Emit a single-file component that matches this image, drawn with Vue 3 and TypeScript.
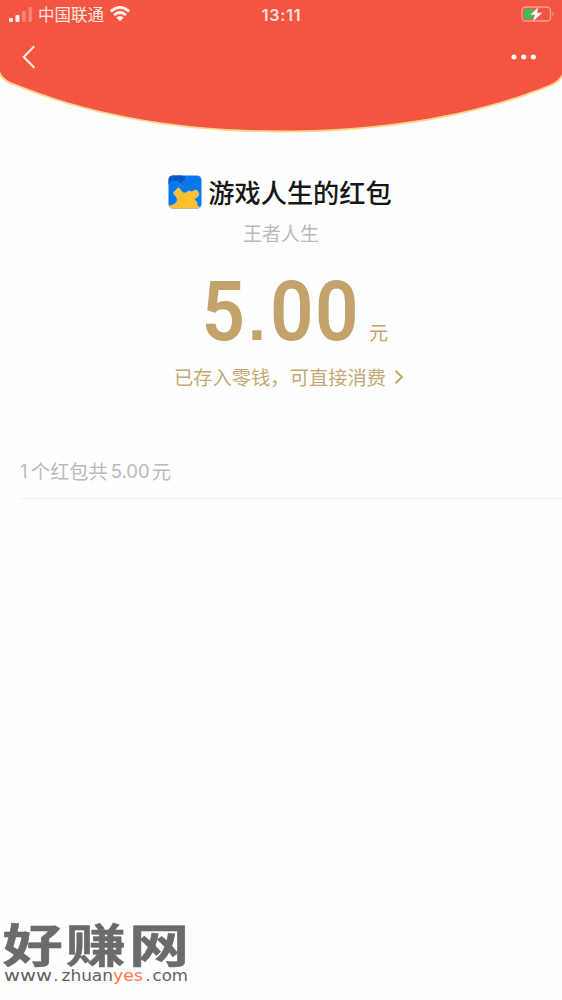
<script setup lang="ts">
const carrier = '中国联通'
const time = '13:11'
const sender = '游戏人生的红包'
const greeting = '王者人生'
</script>

<template>
  <main class="page">
    <header class="hero">
      <svg class="curve" width="562" height="136" viewBox="0 0 562 136" aria-hidden="true">
        <path class="glow" d="M0 0H562V74Q559 81 549 85C475 115 382 130.5 281 130.5S91 115 13 83Q4 80 0 72Z" />
        <path class="red" d="M0 0H562V74Q559 81 549 85C475 115 382 130.5 281 130.5S91 115 13 83Q4 80 0 72Z" />
      </svg>
      <div class="status">
        <div class="network">
          <svg class="signal" width="24" height="16" viewBox="0 0 24 16">
            <rect x="0" y="12" width="4" height="4" rx="1" />
            <rect x="6.5" y="9" width="4" height="7" rx="1" />
            <rect class="dim" x="13" y="5" width="4" height="11" rx="1" />
            <rect class="dim" x="19.5" y="1" width="3.5" height="15" rx="1" />
          </svg>
          <span class="carrier">{{ carrier }}</span>
          <svg class="wifi" width="22" height="16" viewBox="0 0 22 16">
            <path d="M1.8 5.4Q11-2.6 20.2 5.4M5 9Q11 4 17 9" />
            <path class="dot" d="M7.3 11.4Q11 8.4 14.7 11.4L11 15.2Z" />
          </svg>
        </div>
        <span class="time">{{ time }}</span>
        <svg class="battery" width="34" height="17" viewBox="0 0 34 17">
          <rect class="case" x="1" y="1" width="28.5" height="14" rx="3.5" />
          <rect class="charge" x="3" y="3" width="10" height="10" rx="1.5" />
          <path class="tip" d="M31.5 5.5Q33.5 8 31.5 10.5Z" />
          <path class="bolt" d="M17.5 .8L9 9H13.6L11.5 16L21.5 6.8H16.3Z" />
        </svg>
      </div>
      <nav class="nav">
        <svg width="14" height="24" viewBox="0 0 14 24"><path class="back" d="M12.3 1.2L1.7 12L12.3 22.8" /></svg>
        <svg width="26" height="6" viewBox="0 0 26 6"><g class="more"><circle cx="3" cy="3" r="2.5" /><circle cx="12.7" cy="3" r="2.5" /><circle cx="22.3" cy="3" r="2.5" /></g></svg>
      </nav>
    </header>

    <section class="summary">
      <div class="sender">
        <svg class="avatar" width="34" height="34" viewBox="0 0 34 34">
          <defs><clipPath id="tile"><rect x=".5" y=".5" width="33" height="33" rx="4.5" /></clipPath></defs>
          <g clip-path="url(#tile)">
            <rect width="34" height="34" fill="#0878ed" />
            <path d="M0 0H14L19 4L13 10L9 6L5 6L0 10Z" fill="#0759c9" />
            <path d="M20 2L10 12M9 6L16 13M5 6L1 10" fill="none" stroke="#2e8df2" stroke-width=".8" />
            <path d="M0 34V31Q5 31 8 28Q10.5 25 8.5 22Q5.5 19 5.5 17.5L10.5 12.5Q12.5 14 14 17Q16 19 18.5 17.5Q20.5 15.5 22 16.2Q24 17.5 25.5 16Q28 14 30 16.5Q32 19.5 29.5 22Q27 23 26.5 24.5L29 27.5Q28 30 31 32L34 33V34Z" fill="#ffc02d" stroke="#b9c69b" stroke-width=".9" />
          </g>
        </svg>
        <h1>{{ sender }}</h1>
      </div>
      <p class="greeting">{{ greeting }}</p>
      <div class="amount">
        <svg class="number" width="156" height="100" viewBox="0 0 156 100">
          <g transform="scale(.92 1)"><text y="77.5" x="-.5 74 122.7">500</text></g>
          <text class="point" x="46" y="77">.</text>
        </svg>
        <span class="unit">元</span>
      </div>
      <div class="deposit">
        <span>已存入零钱，可直接消费</span>
        <svg width="10" height="16" viewBox="0 0 10 16"><path d="M1.5 1.8L8 8L1.5 14.2" /></svg>
      </div>
    </section>

    <div class="total"><span class="sum one">1</span><span>个红包共</span><span class="sum gap">5.00</span><span>元</span></div>

    <footer class="watermark">
      <svg width="190" height="90" viewBox="0 0 190 90">
        <g transform="translate(2.5 62) scale(1.31 1)"><text class="brand" x="0 48.3 96.6" y="0">好赚网</text></g>
        <g class="url">
          <text x="4" y="81" textLength="48" lengthAdjust="spacingAndGlyphs">www</text>
          <text x="53.5" y="81">.</text>
          <text x="61.5" y="81" textLength="51.5" lengthAdjust="spacingAndGlyphs">zhuan</text>
          <text class="yes" x="113" y="81" textLength="30" lengthAdjust="spacingAndGlyphs">yes</text>
          <text x="145.5" y="81">.</text>
          <text x="152.5" y="81" textLength="35.5" lengthAdjust="spacingAndGlyphs">com</text>
        </g>
      </svg>
    </footer>
  </main>
</template>

<style>
body { margin: 0; background: #fefefe; }
</style>

<style scoped>
.page { width: 562px; height: 1000px; display: flex; flex-direction: column; overflow: hidden; background: #fefefe; font-family: "Liberation Sans", "Noto Sans CJK SC", sans-serif; }
svg { display: block; flex: none; }
.hero { position: relative; height: 136px; flex: none; }
.curve { position: absolute; inset: 0; }
.red { fill: #f45543; }
.glow { fill: none; stroke: #ffd58b; stroke-width: 4; }
.status { position: relative; height: 28px; display: grid; grid-template-columns: 1fr auto 1fr; align-items: center; padding: 0 7px 0 9px; color: #ffe5df; }
.network { display: flex; align-items: center; }
.signal { fill: #fff0ec; }
.dim { opacity: .3; }
.carrier { margin-left: 5px; padding-top: 2px; font-size: 16.5px; line-height: 24px; }
.wifi { margin-left: 5px; fill: none; stroke: #fff5ef; stroke-width: 2.8; }
.wifi .dot { fill: #fff5ef; stroke: none; }
.time { font: 600 16px/24px Inter, sans-serif; letter-spacing: .8px; margin-right: 1px; padding-top: 1px; }
.battery { justify-self: end; }
.case { fill: none; stroke: #f9a294; stroke-width: 1.3; }
.charge { fill: #38bf58; }
.tip { fill: #f9a294; }
.bolt { fill: #fff; stroke: #f45543; stroke-width: .4; }
.nav { position: relative; display: flex; justify-content: space-between; align-items: center; height: 58px; padding: 0 25px 0 22px; }
.back { fill: none; stroke: #fff1ec; stroke-width: 2; }
.more { fill: #fff; }
.summary { display: flex; flex-direction: column; align-items: center; padding-top: 38px; }
.sender { display: flex; align-items: center; gap: 6px; height: 36px; padding-right: 2px; }
h1 { margin: 0; font: 500 26.2px/36px "Noto Sans CJK SC", sans-serif; color: #161616; }
.greeting { margin: 10px 0 0; font-size: 19px; line-height: 30px; color: #bababa; }
.amount { display: flex; align-items: flex-start; height: 100px; margin-top: 13px; padding-left: 28px; color: #c3a36b; }
.number { font: 600 83px Roboto, sans-serif; fill: #c3a36b; overflow: visible; }
.point { font: 700 64px "Liberation Sans", sans-serif; }
.unit { margin: 57px 0 0 11px; font-size: 19px; line-height: 28px; }
.deposit { display: flex; align-items: center; gap: 8px; margin-top: -2px; padding-left: 16px; height: 32px; color: #c6a873; font-size: 19.3px; }
.deposit path { fill: none; stroke: #c3a36b; stroke-width: 1.9; }
.total { display: flex; align-items: center; height: 54px; padding-top: 2px; margin: 49px 0 0 20px; border-bottom: 1px solid #f0f0f0; color: #bababa; font-size: 19.2px; }
.sum { font: 18.5px Inter, sans-serif; }
.one { width: 11px; }
.gap { margin: 0 2px 0 3px; }
.watermark { margin-top: auto; height: 100px; }
.brand { font: 700 46px "Noto Sans CJK SC", sans-serif; fill: #6b6b6b; stroke: #6b6b6b; stroke-width: .5; stroke-linejoin: round; }
.url { font: 15px "DejaVu Sans", sans-serif; fill: #606060; }
.url .yes { fill: #ff7950; }
</style>
